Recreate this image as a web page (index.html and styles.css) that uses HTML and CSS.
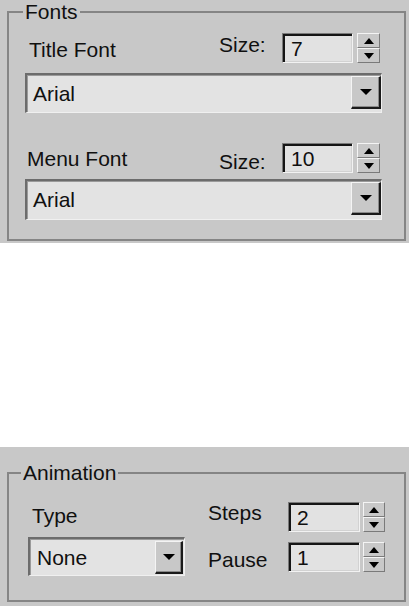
FILE: index.html
```html
<!DOCTYPE html>
<html>
<head>
<meta charset="utf-8">
<link rel="stylesheet" href="styles.css">
</head>
<body>
<div class="panel panel-fonts">
  <section class="group">
    <div class="group-head">
      <span class="corner corner-fonts"></span>
      <span class="legend">Fonts</span>
      <span class="head-line"></span>
    </div>
    <div class="group-body body-fonts">
      <div class="row">
        <span class="label label-title">Title Font</span>
        <div class="size">
          <span class="label size-label size-label-1">Size:</span>
          <div class="edit edit-size">7</div>
          <div class="spin">
            <span class="spin-btn"><i class="tri-up"></i></span>
            <span class="spin-btn"><i class="tri-down"></i></span>
          </div>
        </div>
      </div>
      <div class="combo combo-font combo-1">
        <span class="combo-text">Arial</span>
        <span class="combo-btn"><i class="arrow"></i></span>
      </div>
      <div class="row row-2">
        <span class="label label-menu">Menu Font</span>
        <div class="size">
          <span class="label size-label size-label-2">Size:</span>
          <div class="edit edit-size">10</div>
          <div class="spin">
            <span class="spin-btn"><i class="tri-up"></i></span>
            <span class="spin-btn"><i class="tri-down"></i></span>
          </div>
        </div>
      </div>
      <div class="combo combo-font combo-2">
        <span class="combo-text">Arial</span>
        <span class="combo-btn"><i class="arrow"></i></span>
      </div>
    </div>
  </section>
</div>

<div class="panel panel-anim">
  <section class="group">
    <div class="group-head">
      <span class="corner corner-anim"></span>
      <span class="legend">Animation</span>
      <span class="head-line"></span>
    </div>
    <div class="group-body body-anim">
      <div class="anim-left">
        <span class="label label-type">Type</span>
        <div class="combo combo-type">
          <span class="combo-text combo-text-type">None</span>
          <span class="combo-btn combo-btn-type"><i class="arrow"></i></span>
        </div>
      </div>
      <div class="anim-right">
        <div class="anim-row">
          <span class="label anim-label label-steps">Steps</span>
          <div class="edit edit-anim">2</div>
          <div class="spin spin-anim">
            <span class="spin-btn"><i class="tri-up"></i></span>
            <span class="spin-btn"><i class="tri-down"></i></span>
          </div>
        </div>
        <div class="anim-row anim-row-2">
          <span class="label anim-label label-pause">Pause</span>
          <div class="edit edit-anim">1</div>
          <div class="spin spin-anim">
            <span class="spin-btn"><i class="tri-up"></i></span>
            <span class="spin-btn"><i class="tri-down"></i></span>
          </div>
        </div>
      </div>
    </div>
  </section>
</div>
</body>
</html>
```

FILE: styles.css
```css
html, body {
  margin: 0;
  padding: 0;
  background: #ffffff;
}
body {
  font-family: "Liberation Sans", Arial, sans-serif;
  font-size: 21px;
  line-height: 24px;
  color: #101010;
  width: 411px;
  height: 606px;
  overflow: hidden;
}
.panel {
  background: #c8c8c8;
  width: 409px;
  box-sizing: border-box;
}
.panel-fonts {
  height: 243px;
}
.panel-anim {
  margin-top: 204px;
  height: 159px;
  padding-top: 14px;
}
.group {
  margin-left: 7px;
  width: 399px;
}
.group-head {
  display: flex;
  align-items: flex-start;
  height: 24px;
}
.corner {
  box-sizing: border-box;
  height: 13px;
  margin-top: 11px;
  border-top: 2px solid #858585;
  border-left: 2px solid #858585;
}
.corner-fonts {
  width: 16px;
}
.corner-anim {
  width: 14px;
}
.legend {
  padding: 0 2px;
  white-space: nowrap;
}
.head-line {
  flex: 1;
  box-sizing: border-box;
  height: 13px;
  margin-top: 11px;
  border-top: 2px solid #858585;
  border-right: 2px solid #858585;
}
.group-body {
  box-sizing: border-box;
  border: 2px solid #858585;
  border-top: none;
}
.body-fonts {
  padding: 9px 22px 19px 16px;
}
.body-anim {
  padding: 17px 19px 24px 19px;
  display: flex;
  gap: 23px;
}
.label {
  display: block;
  white-space: nowrap;
}
.row {
  display: flex;
  justify-content: space-between;
  align-items: flex-start;
  height: 30px;
}
.row-2 {
  margin-top: 30px;
}
.label-title {
  margin-left: 4px;
  margin-top: 5px;
}
.label-menu {
  margin-left: 2px;
  margin-top: 4px;
}
.size {
  display: flex;
  align-items: flex-start;
  margin-right: 2px;
}
.size-label {
  width: 63px;
}
.size-label-1 {
  margin-top: 0;
}
.size-label-2 {
  margin-top: 7px;
}
.edit {
  box-sizing: border-box;
  height: 30px;
  background: #e2e2e2;
  border-style: solid;
  border-width: 1px;
  border-color: #7a7a7a #f2f2f2 #f2f2f2 #7a7a7a;
  box-shadow: inset 2px 2px 0 #151515, inset -1px -1px 0 #d2d2d2;
  display: flex;
  align-items: center;
  padding-left: 8px;
  padding-top: 1px;
}
.edit-size {
  width: 71px;
}
.spin {
  width: 23px;
  height: 30px;
  margin-left: 4px;
  display: flex;
  flex-direction: column;
}
.spin-btn {
  flex: 1;
  box-sizing: border-box;
  background: #c8c8c8;
  border-style: solid;
  border-width: 1px;
  border-color: #f4f4f4 #7a7a7a #7a7a7a #f4f4f4;
  display: flex;
  align-items: center;
  justify-content: center;
}
.tri-up {
  width: 0;
  height: 0;
  border-left: 5px solid transparent;
  border-right: 5px solid transparent;
  border-bottom: 6px solid #000;
}
.tri-down {
  width: 0;
  height: 0;
  border-left: 5px solid transparent;
  border-right: 5px solid transparent;
  border-top: 6px solid #000;
}
.combo {
  box-sizing: border-box;
  display: flex;
  align-items: flex-start;
  background: #e3e3e3;
  border-style: solid;
  border-width: 2px 1px 1px 2px;
  border-color: #6c6c6c #f0f0f0 #f0f0f0 #6c6c6c;
  box-shadow: inset 1px 1px 0 #9a9a9a;
}
.combo-font {
  width: 357px;
}
.combo-1 {
  margin-top: 10px;
  height: 40px;
}
.combo-2 {
  margin-top: 6px;
  height: 41px;
}
.combo-text {
  flex: 1;
  padding-left: 6px;
  padding-top: 7px;
}
.combo-btn {
  box-sizing: border-box;
  width: 30px;
  height: 33px;
  margin-top: 1px;
  background: #c8c8c8;
  border-style: solid;
  border-width: 1px 2px 2px 1px;
  border-color: #f4f4f4 #1a1a1a #1a1a1a #f4f4f4;
  box-shadow: inset -1px -1px 0 #8a8a8a;
  display: flex;
  align-items: center;
  justify-content: center;
}
.arrow {
  width: 0;
  height: 0;
  border-left: 6px solid transparent;
  border-right: 6px solid transparent;
  border-top: 6px solid #000;
}
.anim-left {
  width: 157px;
  display: flex;
  flex-direction: column;
}
.label-type {
  margin-left: 4px;
  margin-top: 2px;
}
.combo-type {
  width: 157px;
  height: 39px;
  margin-top: 9px;
}
.combo-text-type {
  padding-left: 7px;
  padding-top: 7px;
}
.combo-btn-type {
  width: 28px;
  margin-top: 2px;
  margin-right: 1px;
}
.anim-right {
  width: 177px;
  display: flex;
  flex-direction: column;
}
.anim-row {
  display: flex;
  align-items: flex-start;
  height: 30px;
}
.anim-row-2 {
  margin-top: 10px;
}
.anim-label {
  width: 80px;
}
.label-steps {
  margin-top: -1px;
}
.label-pause {
  margin-top: 6px;
}
.edit-anim {
  width: 72px;
}
.spin-anim {
  width: 22px;
  margin-left: 3px;
}
```
